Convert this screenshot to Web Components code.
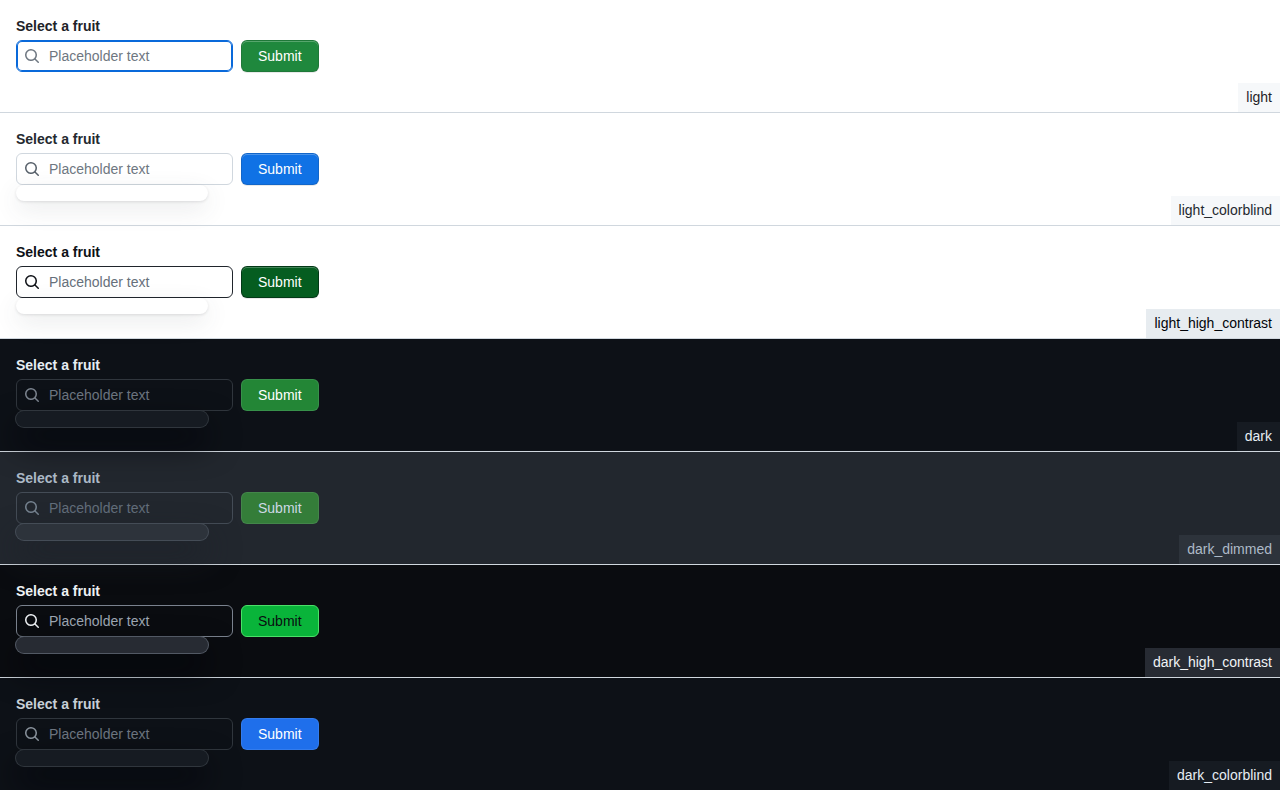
<!DOCTYPE html>
<html lang="en">
<head>
<meta charset="utf-8">
<meta name="viewport" content="width=device-width, initial-scale=1">
<title>Autocomplete themes</title>
<style>
  body { margin: 0; font: 14px/21px "Liberation Sans", Arial, sans-serif; }
</style>
</head>
<body>
<theme-gallery></theme-gallery>

<template id="theme-row">
  <style>
    :host {
      display: flex;
      justify-content: space-between;
      gap: 16px;
      background: var(--canvas);
      color: var(--fg);
      border-bottom: 1px solid #d0d7de;
    }
    :host(:last-child) { border-bottom: 0; }
    .content { padding: 16px 16px 40px; }
    .name {
      align-self: flex-end;
      padding: 4px 8px;
      background: var(--subtle);
      color: var(--name-fg, var(--fg));
    }
  </style>
  <div class="content"><slot></slot></div>
  <div class="name"><slot name="name"></slot></div>
</template>

<template id="fruit-form">
  <style>
    :host { display: block; }
    form { margin: 0; }
    label { display: block; font-weight: 600; line-height: 20px; margin-bottom: 4px; }
    .controls { display: flex; gap: 8px; }
    .field {
      position: relative;
      display: flex;
      align-items: center;
      box-sizing: border-box;
      width: 217px;
      height: 32px;
      border: 1px solid var(--border);
      border-radius: 6px;
      background: var(--canvas);
    }
    :host([active]) .field { border-color: #0969da; box-shadow: inset 0 0 0 1px #0969da; }
    svg { flex: none; margin: 0 9px 0 7px; fill: var(--icon); }
    input {
      flex: 1;
      min-width: 0;
      padding: 0 8px 0 0;
      border: 0;
      outline: 0;
      background: transparent;
      color: inherit;
      font: inherit;
      line-height: 20px;
    }
    input::placeholder { color: var(--placeholder); opacity: 1; }
    .overlay {
      position: absolute;
      z-index: 1;
      top: 100%;
      left: 0;
      margin: 1px 0 0 -1px;
      width: 192px;
      height: 16px;
      border-radius: 12px;
      background: var(--overlay);
      box-shadow: var(--overlay-shadow);
    }
    :host([active]) .overlay { display: none; }
    button {
      height: 32px;
      padding: 0 16px;
      border: 1px solid var(--btn-border);
      border-radius: 6px;
      background: var(--btn);
      color: var(--btn-fg);
      box-shadow: var(--btn-shadow);
      font: inherit;
      font-weight: 500;
      line-height: 20px;
      cursor: pointer;
    }
  </style>
  <form>
    <label for="fruit">Select a fruit</label>
    <div class="controls">
      <div class="field">
        <svg width="16" height="16" viewBox="0 0 16 16" aria-hidden="true"><path d="M10.68 11.74a6 6 0 0 1-7.922-8.982 6 6 0 0 1 8.982 7.922l3.04 3.04a.749.749 0 0 1-.326 1.275.749.749 0 0 1-.734-.215ZM11.5 7a4.499 4.499 0 1 0-8.997 0A4.499 4.499 0 0 0 11.5 7Z"/></svg>
        <input id="fruit" type="text" placeholder="Placeholder text" autocomplete="off">
        <div class="overlay"></div>
      </div>
      <button type="button">Submit</button>
    </div>
  </form>
</template>

<script>
  const LIGHT_BTN = '0 1px 0 rgba(31,35,40,.1), inset 0 1px 0 rgba(255,255,255,.25)';
  const LIGHT_OVERLAY = '0 1px 3px rgba(31,35,40,.12), 0 8px 24px rgba(66,74,83,.12)';
  const DARK_OVERLAY = '0 0 0 1px #30363d, 0 16px 32px rgba(1,4,9,.85)';

  const light = {
    canvas: '#ffffff', fg: '#1f2328', subtle: '#f6f8fa', border: '#d0d7de',
    icon: '#6e7781', placeholder: '#6e7781', overlay: '#ffffff',
    'overlay-shadow': LIGHT_OVERLAY, btn: '#1f883d', 'btn-fg': '#ffffff',
    'btn-border': 'rgba(31,35,40,.15)', 'btn-shadow': LIGHT_BTN
  };
  const dark = {
    canvas: '#0d1117', fg: '#e6edf3', subtle: '#161b22', border: '#30363d',
    icon: '#7d8590', placeholder: '#6e7681', overlay: '#161b22',
    'overlay-shadow': DARK_OVERLAY, btn: '#238636', 'btn-fg': '#ffffff',
    'btn-border': 'rgba(240,246,252,.1)', 'btn-shadow': 'none'
  };
  const THEMES = {
    light,
    light_colorblind: { ...light, fg: '#24292f', icon: '#57606a', btn: '#1072e5' },
    light_high_contrast: {
      ...light, fg: '#0e1116', 'name-fg': '#010409', subtle: '#e7ecf0', border: '#20252c', icon: '#0e1116',
      placeholder: '#66707b', btn: '#055d20', 'btn-border': 'rgba(1,4,9,.4)'
    },
    dark,
    dark_dimmed: {
      ...dark, canvas: '#22272e', fg: '#adbac7', subtle: '#2d333b', border: '#444c56',
      icon: '#768390', placeholder: '#636e7b', overlay: '#2d333b',
      'overlay-shadow': '0 0 0 1px #444c56, 0 16px 32px rgba(28,33,40,.85)',
      btn: '#347d39', 'btn-fg': '#cdd9e5', 'btn-border': 'rgba(205,217,229,.1)'
    },
    dark_high_contrast: {
      ...dark, canvas: '#0a0c10', fg: '#f0f3f6', subtle: '#272b33', border: '#7a828e',
      icon: '#f0f3f6', placeholder: '#9ea7b3', overlay: '#272b33',
      'overlay-shadow': '0 0 0 1px #525964, 0 16px 32px rgba(1,4,9,.85)',
      btn: '#09b43a', 'btn-fg': '#0a0c10', 'btn-border': '#4ae168'
    },
    dark_colorblind: { ...dark, fg: '#c9d1d9', 'name-fg': '#e6edf3', icon: '#8b949e', btn: '#1f6feb' }
  };

  const stamp = (host, id) => host.attachShadow({ mode: 'open' })
    .append(document.getElementById(id).content.cloneNode(true));

  class ThemeRow extends HTMLElement {
    constructor() { super(); stamp(this, 'theme-row'); }
    set theme(tokens) {
      for (const [key, value] of Object.entries(tokens)) this.style.setProperty('--' + key, value);
    }
  }
  class FruitForm extends HTMLElement {
    constructor() { super(); stamp(this, 'fruit-form'); }
  }
  class ThemeGallery extends HTMLElement {
    constructor() {
      super();
      const root = this.attachShadow({ mode: 'open' });
      root.innerHTML = '<style>:host, main { display: block; }</style><main></main>';
      const main = root.querySelector('main');
      Object.entries(THEMES).forEach(([name, tokens], index) => {
        const row = document.createElement('theme-row');
        row.theme = tokens;
        row.innerHTML = `<fruit-form${index ? '' : ' active'}></fruit-form><span slot="name">${name}</span>`;
        main.append(row);
      });
    }
  }
  customElements.define('theme-row', ThemeRow);
  customElements.define('fruit-form', FruitForm);
  customElements.define('theme-gallery', ThemeGallery);
</script>
</body>
</html>
